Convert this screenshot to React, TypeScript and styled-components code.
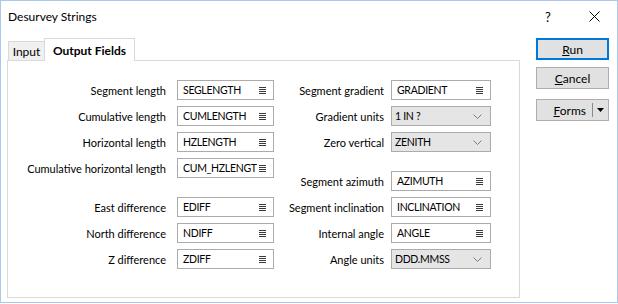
import styled, { createGlobalStyle } from "styled-components";

const GlobalStyle = createGlobalStyle`
  body {
    margin: 0;
    background: #fff;
    font-family: Lato, "Liberation Sans", sans-serif;
    color: #000;
  }
`;

const Window = styled.div`
  width: 618px;
  height: 303px;
  box-sizing: border-box;
  border: 1px solid #a9c9ea;
  background: #fff;
  display: flex;
  flex-direction: column;
`;

const TitleBar = styled.div`
  height: 31px;
  display: flex;
  align-items: center;
  padding-left: 7px;
  font-size: 12px;
`;

const Title = styled.div`
  flex: 1;
`;

const TitleButton = styled.div`
  width: 46px;
  height: 31px;
  display: flex;
  align-items: center;
  justify-content: center;
  font-size: 13px;
`;

const Body = styled.div`
  display: flex;
  padding: 5px 0 0 6px;
`;

const TabArea = styled.div`
  width: 513px;
  display: flex;
  flex-direction: column;
`;

const TabStrip = styled.div`
  display: flex;
  align-items: flex-end;
  height: 23px;
  padding-left: 1px;
`;

const Tab = styled.div<{ $active?: boolean }>`
  box-sizing: border-box;
  border: 1px solid #d9d9d9;
  border-bottom: none;
  display: flex;
  align-items: center;
  justify-content: center;
  font-size: 12px;
  position: relative;
  z-index: ${(p) => (p.$active ? 1 : 0)};
  height: ${(p) => (p.$active ? 23 : 19)}px;
  margin-bottom: ${(p) => (p.$active ? -1 : 0)}px;
  width: ${(p) => (p.$active ? 91 : 37)}px;
  background: ${(p) => (p.$active ? "#fff" : "#f0f0f0")};
  font-weight: ${(p) => (p.$active ? 700 : 400)};
  margin-left: ${(p) => (p.$active ? -1 : 0)}px;
`;

const Panel = styled.div`
  height: 238px;
  box-sizing: border-box;
  border: 1px solid #dadada;
  display: flex;
  gap: 6px;
  padding: 19px 0 0 8px;
`;

const Column = styled.div<{ $label: number; $box: number; $gap: number }>`
  display: grid;
  grid-template-columns: ${(p) => p.$label}px ${(p) => p.$box}px;
  column-gap: ${(p) => p.$gap}px;
  row-gap: 6px;
  align-items: center;
  align-content: start;
`;

const Label = styled.div`
  font-size: 11px;
  text-align: right;
  white-space: nowrap;
`;

const Spacer = styled.div`
  grid-column: 1 / -1;
  height: 7px;
`;

const Box = styled.div<{ $select?: boolean }>`
  height: 20px;
  box-sizing: border-box;
  border: 1px solid #ababab;
  background: ${(p) => (p.$select ? "#e5e5e5" : "#fff")};
  display: flex;
  align-items: center;
  padding: 0 ${(p) => (p.$select ? 8 : 7)}px 0 ${(p) => (p.$select ? 3 : 5)}px;
  font-size: 10.5px;
  letter-spacing: -0.3px;
`;

const BoxText = styled.span`
  flex: 1;
  white-space: nowrap;
`;

const Buttons = styled.div`
  margin-left: 16px;
  padding-top: 1px;
  display: flex;
  flex-direction: column;
  width: 73px;
`;

const Button = styled.div<{ $default?: boolean; $space?: number }>`
  height: 22px;
  box-sizing: border-box;
  margin-bottom: ${(p) => p.$space ?? 0}px;
  border: ${(p) => (p.$default ? "2px solid #0078d7" : "1px solid #adadad")};
  background: #e1e1e1;
  display: flex;
  align-items: center;
  justify-content: center;
  font-size: 12px;
`;

const SplitText = styled.span`
  flex: 1;
  text-align: right;
  padding-right: 6px;
`;

const SplitDivider = styled.span`
  width: 1px;
  height: 14px;
  background: #8a8a8a;
`;

const SplitArrow = styled.span`
  width: 15px;
  display: flex;
  justify-content: center;
`;

const MenuIcon = () => (
  <svg width="7" height="7" viewBox="0 0 7 7">
    {[0.5, 2.5, 4.5, 6.5].map((y) => (
      <line key={y} x1="0" x2="7" y1={y} y2={y} stroke="#3a3a3a" strokeWidth="1" />
    ))}
  </svg>
);

const Chevron = () => (
  <svg width="9" height="5" viewBox="0 0 9 5">
    <polyline points="0.5,0.5 4.5,4.5 8.5,0.5" fill="none" stroke="#7a7a7a" strokeWidth="1" />
  </svg>
);

type Field = { label: string; value: string; select?: boolean } | "gap";

const leftFields: Field[] = [
  { label: "Segment length", value: "SEGLENGTH" },
  { label: "Cumulative length", value: "CUMLENGTH" },
  { label: "Horizontal length", value: "HZLENGTH" },
  { label: "Cumulative horizontal length", value: "CUM_HZLENGT" },
  "gap",
  { label: "East difference", value: "EDIFF" },
  { label: "North difference", value: "NDIFF" },
  { label: "Z difference", value: "ZDIFF" },
];

const rightFields: Field[] = [
  { label: "Segment gradient", value: "GRADIENT" },
  { label: "Gradient units", value: "1 IN ?", select: true },
  { label: "Zero vertical", value: "ZENITH", select: true },
  "gap",
  { label: "Segment azimuth", value: "AZIMUTH" },
  { label: "Segment inclination", value: "INCLINATION" },
  { label: "Internal angle", value: "ANGLE" },
  { label: "Angle units", value: "DDD.MMSS", select: true },
];

function Fields({ fields }: { fields: Field[] }) {
  return (
    <>
      {fields.map((f, i) =>
        f === "gap" ? (
          <Spacer key={i} />
        ) : (
          <>
            <Label key={"l" + i}>{f.label}</Label>
            <Box key={"b" + i} $select={f.select}>
              <BoxText>{f.value}</BoxText>
              {f.select ? <Chevron /> : <MenuIcon />}
            </Box>
          </>
        )
      )}
    </>
  );
}

export default function App() {
  return (
    <>
      <GlobalStyle />
      <Window>
        <TitleBar>
          <Title>Desurvey Strings</Title>
          <TitleButton>?</TitleButton>
          <TitleButton>
            <svg width="11" height="11" viewBox="0 0 11 11">
              <path d="M0.5 0.5 L10.5 10.5 M10.5 0.5 L0.5 10.5" stroke="#000" strokeWidth="1" />
            </svg>
          </TitleButton>
        </TitleBar>
        <Body>
          <TabArea>
            <TabStrip>
              <Tab>Input</Tab>
              <Tab $active>Output Fields</Tab>
            </TabStrip>
            <Panel>
              <Column $label={150} $box={97} $gap={11}>
                <Fields fields={leftFields} />
              </Column>
              <Column $label={104} $box={100} $gap={7}>
                <Fields fields={rightFields} />
              </Column>
            </Panel>
          </TabArea>
          <Buttons>
            <Button $default $space={7}>
              <span>
                <u>R</u>un
              </span>
            </Button>
            <Button $space={10}>
              <span>
                <u>C</u>ancel
              </span>
            </Button>
            <Button>
              <SplitText>
                <u>F</u>orms
              </SplitText>
              <SplitDivider />
              <SplitArrow>
                <svg width="7" height="4" viewBox="0 0 7 4">
                  <path d="M0 0 H7 L3.5 4 Z" fill="#000" />
                </svg>
              </SplitArrow>
            </Button>
          </Buttons>
        </Body>
      </Window>
    </>
  );
}
